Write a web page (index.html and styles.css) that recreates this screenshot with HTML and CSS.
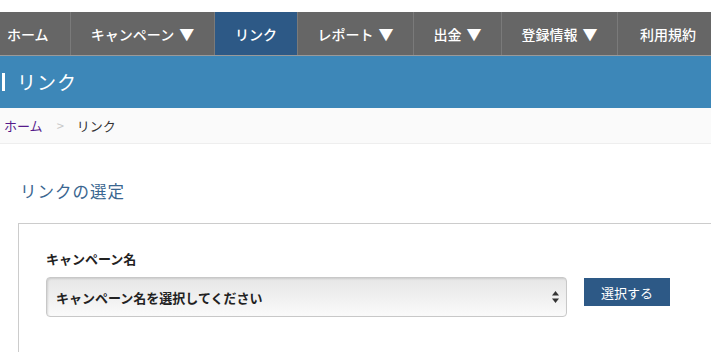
FILE: index.html
```html
<!DOCTYPE html>
<html lang="ja">
<head>
<meta charset="utf-8">
<title>リンク</title>
<link rel="stylesheet" href="styles.css">
</head>
<body>
<nav class="nav">
  <a class="nav-item w-home" href="#">ホーム</a>
  <a class="nav-item w-camp" href="#">キャンペーン<span class="caret">▼</span></a>
  <a class="nav-item w-link active" href="#">リンク</a>
  <a class="nav-item w-rep" href="#">レポート<span class="caret">▼</span></a>
  <a class="nav-item w-out" href="#">出金<span class="caret">▼</span></a>
  <a class="nav-item w-reg" href="#">登録情報<span class="caret">▼</span></a>
  <a class="nav-item w-terms" href="#">利用規約</a>
</nav>
<header class="page-title">
  <h1 class="page-title-text">リンク</h1>
</header>
<div class="breadcrumb">
  <a class="crumb-link" href="#">ホーム</a>
  <span class="crumb-sep">&gt;</span>
  <span class="crumb-current">リンク</span>
</div>
<main class="content">
  <h2 class="section-title">リンクの選定</h2>
  <div class="panel">
    <label class="field-label">キャンペーン名</label>
    <div class="field-row">
      <div class="select">
        <span class="select-text">キャンペーン名を選択してください</span>
        <svg class="select-arrows" width="7" height="12" viewBox="0 0 7 12"><path d="M3.5 0 L7 4.5 H0 Z" fill="#333"/><path d="M3.5 12 L7 7.5 H0 Z" fill="#333"/></svg>
      </div>
      <button class="btn">選択する</button>
    </div>
  </div>
</main>
</body>
</html>
```
FILE: styles.css
```css
* { box-sizing: border-box; }
html, body { margin: 0; padding: 0; }
body {
  background: #fff;
  font-family: "Noto Sans CJK JP", "Noto Sans", sans-serif;
  color: #333;
  padding-top: 12px;
  overflow: hidden;
}
.nav {
  display: flex;
  height: 44px;
  background: #666;
  border-bottom: 1px solid #9a9a9a;
  white-space: nowrap;
}
.nav-item {
  display: flex;
  align-items: center;
  justify-content: center;
  flex: none;
  color: #fff;
  text-decoration: none;
  font-size: 14px;
  font-weight: 500;
  border-right: 1px solid #7a7a7a;
}
.caret { margin-left: 5px; font-size: 15px; }
.nav-item.active { background: #2d5986; }
.w-home { width: 71px; justify-content: flex-start; padding-left: 7px; }
.w-camp { width: 144px; }
.w-link { width: 83px; }
.w-rep { width: 116px; }
.w-out { width: 88px; }
.w-reg { width: 116px; }
.w-terms { width: 100px; border-right: none; }
.page-title {
  background: #3d87b8;
  height: 52px;
  display: flex;
  align-items: center;
  padding-left: 2px;
}
.page-title-text {
  margin: 0;
  color: #fff;
  font-size: 19px;
  font-weight: normal;
  border-left: 3px solid #fff;
  padding-left: 12px;
  line-height: 18px;
  letter-spacing: 1px;
}
.breadcrumb {
  background: #fafafa;
  border-bottom: 1px solid #eee;
  height: 36px;
  display: flex;
  align-items: center;
  font-size: 13px;
  padding-left: 4px;
}
.crumb-link { color: #551a8b; text-decoration: none; }
.crumb-sep { color: #c8c8c8; margin: 0 13px 0 14px; }
.crumb-current { color: #333; }
.content { padding: 35px 0 0 18px; }
.section-title {
  margin: 0 0 20px 2px;
  font-size: 16.5px;
  font-weight: normal;
  color: #3a6690;
  letter-spacing: 1px;
  line-height: 24px;
}
.panel {
  border: 1px solid #ccc;
  border-right: none;
  padding: 26px 0 40px 27px;
}
.field-label {
  display: block;
  font-size: 13px;
  font-weight: bold;
  color: #222;
  line-height: 18px;
  margin-bottom: 9px;
}
.field-row {
  display: flex;
  align-items: flex-start;
  gap: 17px;
}
.select {
  width: 521px;
  height: 40px;
  border: 1px solid #c8c8c8;
  border-radius: 4px;
  background: linear-gradient(#e6e6e6, #fafafa);
  box-shadow: inset 1px 1px 2px rgba(0,0,0,0.12);
  display: flex;
  align-items: center;
  justify-content: space-between;
  padding: 0 7px 0 9px;
}
.select-text {
  font-size: 13px;
  font-weight: bold;
  color: #222;
}
.btn {
  margin-top: 1px;
  width: 86px;
  height: 28px;
  border: none;
  background: #2d5986;
  color: #fff;
  font-family: inherit;
  font-size: 13px;
  padding: 0;
}
```
